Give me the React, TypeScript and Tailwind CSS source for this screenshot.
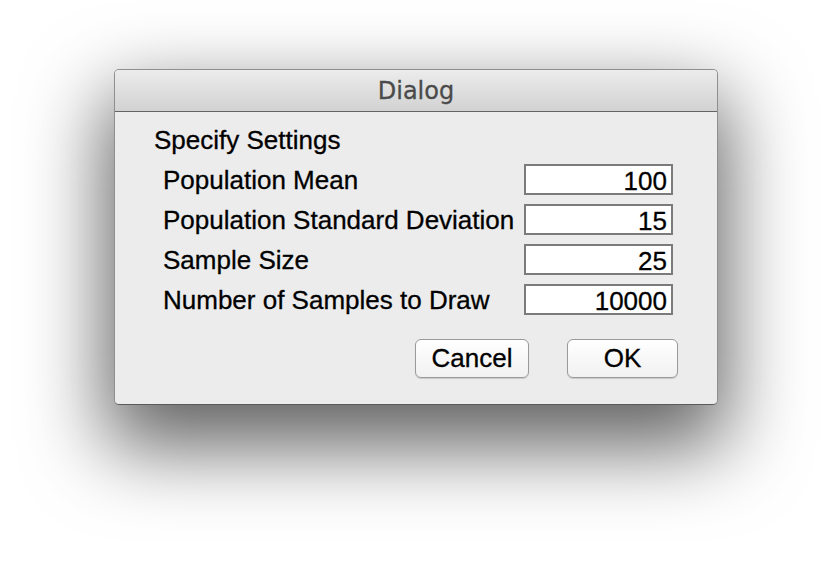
import React from "react";

const rows = [
  { label: "Population Mean", value: "100" },
  { label: "Population Standard Deviation", value: "15" },
  { label: "Sample Size", value: "25" },
  { label: "Number of Samples to Draw", value: "10000" },
];

export default function App() {
  return (
    <div
      className="w-full h-[562px] bg-white flex justify-center pt-[69px] [-webkit-text-stroke:0.3px_currentColor]"
      style={{ fontFamily: '"Liberation Sans", Arial, sans-serif' }}
    >
      <div className="w-[604px] h-[336px] rounded-[5px] bg-[#ececec] border border-[#8f8f8f] border-b-[#5a5a5a] shadow-[0_34px_80px_8px_rgba(0,0,0,0.62)] overflow-hidden flex flex-col">
        {/* Title bar */}
        <div className="h-[42px] border-b border-[#646464] bg-gradient-to-b from-[#ececec] to-[#d2d2d2] flex items-center justify-center">
          <span
            className="text-[24px] leading-[30px] text-[#4a4a4a]"
            style={{ fontFamily: '"DejaVu Sans", sans-serif' }}
          >
            Dialog
          </span>
        </div>

        {/* Body */}
        <div className="pl-[39px] pr-[44px] pt-[13px] text-black">
          <div className="text-[26px] leading-[31px]">Specify Settings</div>

          <div className="mt-[8px] pl-[9px] flex flex-col gap-[9px]">
            {rows.map((r) => (
              <div key={r.label} className="h-[31px] flex items-center justify-between">
                <span className="mt-[2px] text-[26px] leading-[31px]">{r.label}</span>
                <div className="w-[149px] h-[31px] border-2 border-[#7b7b7b] bg-white text-right pr-[4px] text-[26px] leading-[31px]">
                  {r.value}
                </div>
              </div>
            ))}
          </div>

          <div className="mt-[24px] -mr-[5px] flex justify-end gap-[38px]">
            <button className="w-[114px] h-[39px] rounded-[6px] border border-[#9a9a9a] bg-gradient-to-b from-white to-[#f1f1f1] shadow-[0_1px_1px_rgba(0,0,0,0.15)] text-[26px] leading-[31px] text-black">
              Cancel
            </button>
            <button className="w-[111px] h-[39px] rounded-[6px] border border-[#9a9a9a] bg-gradient-to-b from-white to-[#f1f1f1] shadow-[0_1px_1px_rgba(0,0,0,0.15)] text-[26px] leading-[31px] text-black">
              OK
            </button>
          </div>
        </div>
      </div>
    </div>
  );
}
